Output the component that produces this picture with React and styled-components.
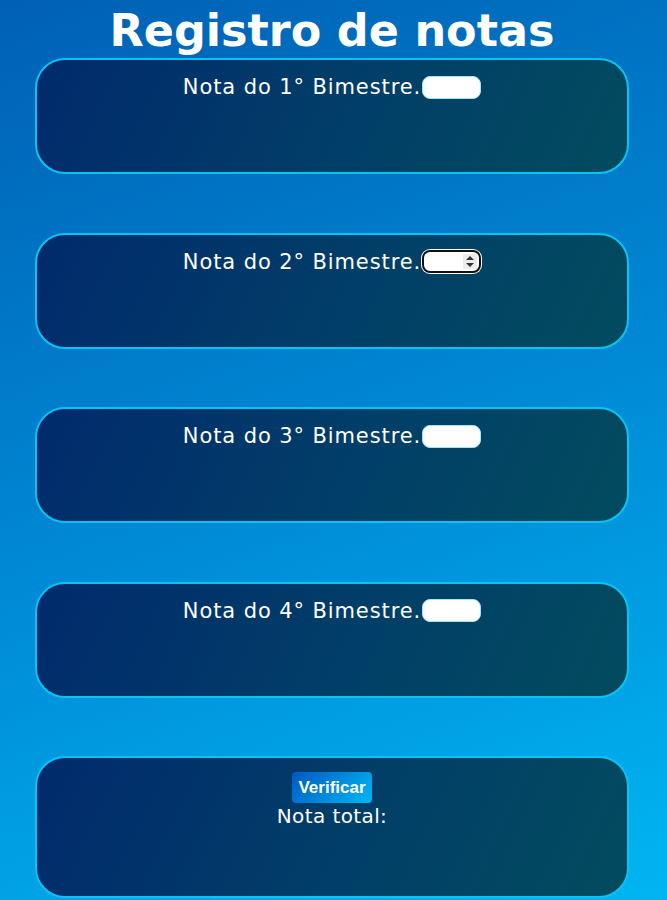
import styled, { createGlobalStyle } from 'styled-components';

const GlobalStyle = createGlobalStyle`
  html, body {
    margin: 0;
    padding: 0;
  }
  body {
    min-height: 900px;
    background: linear-gradient(160deg, #0060b4 0%, #0088d4 50%, #00b6f2 100%);
    font-family: "DejaVu Sans", Verdana, sans-serif;
    color: #fff;
  }
`;

const Page = styled.main`
  display: flex;
  flex-direction: column;
  align-items: center;
  padding: 0 3px 0 0;
`;

const Title = styled.h1`
  margin: 0;
  height: 58px;
  line-height: 62px;
  font-size: 44.5px;
  font-weight: bold;
  font-family: "DejaVu Sans", Verdana, sans-serif;
`;

const List = styled.div`
  display: flex;
  flex-direction: column;
  gap: 58.5px;
  width: 594px;
`;

const Card = styled.section`
  box-sizing: border-box;
  height: ${p => (p.$tall ? '142px' : '116px')};
  border: 2px solid #08c4f4;
  border-radius: 30px;
  background: linear-gradient(115deg, #012a6c 0%, #013f68 55%, #024b5e 100%);
  display: flex;
  flex-direction: column;
  align-items: center;
  padding-top: ${p => (p.$tall ? '14px' : '15px')};
`;

const Row = styled.label`
  display: flex;
  align-items: center;
  font-size: 21px;
  letter-spacing: 0.9px;
  line-height: 24px;
`;

const Field = styled.span`
  position: relative;
  display: inline-flex;
`;

const Input = styled.input`
  box-sizing: border-box;
  width: 59px;
  height: 23px;
  margin-left: 1px;
  border-radius: 8px;
  border: ${p => (p.$active ? '2px solid #111' : '1px solid #9fe4fa')};
  box-shadow: ${p => (p.$active ? '0 0 0 1px #fff' : 'none')};
  background: #fff;
  outline: none;
  padding: 0 4px;
  font-size: 14px;
`;

const Spin = styled.svg`
  position: absolute;
  right: 4px;
  top: 4px;
`;

const Button = styled.button`
  padding: 4px 6px;
  border: none;
  border-radius: 4px;
  background: linear-gradient(135deg, #0058c0, #00b8f4);
  color: #fff;
  font-family: "Liberation Sans", Arial, sans-serif;
  font-weight: bold;
  font-size: 17px;
  line-height: 23px;
`;

const Total = styled.p`
  margin: 1px 0 0;
  font-size: 20px;
  letter-spacing: 0.4px;
  line-height: 24px;
`;

const bimestres = [1, 2, 3, 4];

export default function App() {
  return (
    <>
      <GlobalStyle />
      <Page>
        <Title>Registro de notas</Title>
        <List>
          {bimestres.map(n => (
            <Card key={n}>
              <Row>
                Nota do {n}° Bimestre.
                <Field>
                  <Input type="text" $active={n === 2} />
                  {n === 2 && (
                    <Spin width="14" height="15" viewBox="0 0 14 15">
                      <rect x="0" y="0" width="14" height="15" fill="#ececec" />
                      <path d="M3 6 L7 2 L11 6 Z" fill="#333" />
                      <path d="M3 9 L7 13 L11 9 Z" fill="#333" />
                    </Spin>
                  )}
                </Field>
              </Row>
            </Card>
          ))}
          <Card $tall>
            <Button>Verificar</Button>
            <Total>Nota total:</Total>
          </Card>
        </List>
      </Page>
    </>
  );
}
